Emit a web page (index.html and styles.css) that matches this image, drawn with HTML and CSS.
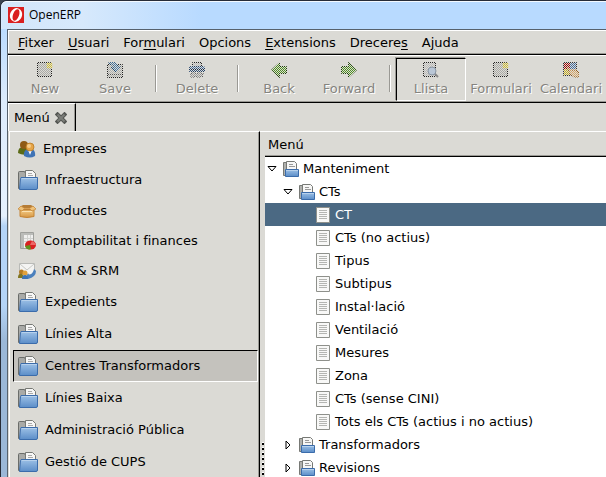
FILE: index.html
```html
<!DOCTYPE html>
<html lang="ca">
<head>
<meta charset="utf-8">
<title>OpenERP</title>
<link rel="stylesheet" href="styles.css">
</head>
<body>
<svg class="defs" aria-hidden="true">
  <defs>
    <linearGradient id="blue" x2="0" y2="1"><stop offset="0" stop-color="#9dc1e6"/><stop offset="1" stop-color="#5b8dc8"/></linearGradient>
    <linearGradient id="box" x2="0" y2="1"><stop offset="0" stop-color="#f3cb85"/><stop offset="1" stop-color="#d69643"/></linearGradient>
    <pattern id="dither" width="2" height="2" patternUnits="userSpaceOnUse"><path d="M0 0h1v1H0zM1 1h1v1H1z" fill="#dbdad5" shape-rendering="crispEdges"/></pattern>
    <symbol id="folder" viewBox="0 0 20 20">
      <path d="M.5 18.500V2.500q0-1 1-1h5l1 2v15z" fill="#a9aaa7" stroke="#6b6d6a"/>
      <path d="M7.500 9V.5h7l3 3V9z" fill="#f7f7f6" stroke="#777975"/>
      <path d="M10 3.500h4M10 5.500h5" stroke="#aaa"/>
      <path d="M3 7.500h16.500V18q0 1.500-1.500 1.500H1.500L2.500 8.500z" fill="url(#blue)" stroke="#3b6cab"/>
      <path d="M4 8.500h15" stroke="#b7d1ec"/>
    </symbol>
    <symbol id="folder-small" viewBox="0 0 16 16">
      <path d="M.5 14.500V1.500h4v13z" fill="#b0b1ae" stroke="#777975"/>
      <path d="M3.500 9V.5h8l2 2V9z" fill="#f7f7f6" stroke="#777975"/>
      <path d="M6 3.500h4M6 5.500h6" stroke="#999"/>
      <path d="M2.500 8.500h13v7h-13z" fill="url(#blue)" stroke="#3b6cab"/>
      <path d="M3 9.500h12" stroke="#b7d1ec"/>
    </symbol>
    <symbol id="page" viewBox="0 0 14 16">
      <path d="M.5.5h13v15H.5z" fill="#f8f8f7" stroke="#8e908b"/>
      <path d="M3 3.500h8M3 5.500h8M3 7.500h8M3 9.500h8M3 11.500h8" stroke="#b4b5b2"/>
    </symbol>
    <symbol id="sheet" viewBox="0 0 16 16">
      <path d="M.5.500h14v14H.5z" fill="#aaaaa6" stroke="#222"/>
      <path d="M12.500 0v7M9 3.500h7M10 1l5 5M15 1l-5 5" stroke="#d0bd2c" stroke-width="1.500"/>
      <path d="M0 0h16v16H0z" fill="url(#dither)"/>
    </symbol>
  </defs>
</svg>
<div class="window">
  <header class="titlebar">
    <svg class="logo" viewBox="0 0 16 16"><path d="M0 0h16v16H0z" fill="#da2020"/><ellipse cx="8" cy="8" rx="6" ry="7" transform="rotate(20 8 8)" fill="#fff"/><ellipse cx="8" cy="8" rx="3" ry="6" transform="rotate(20 8 8)" fill="#da2020"/></svg>
    <h1>OpenERP</h1>
  </header>
  <div class="client">
    <nav class="menubar">
      <button><u>F</u>itxer</button><button><u>U</u>suari</button><button>For<u>m</u>ulari</button><button>Opcions</button><button><u>E</u>xtensions</button><button>Drecere<u>s</u></button><button>A<u>j</u>uda</button>
    </nav>
    <div class="toolbar" role="toolbar">
      <button class="tool" disabled><svg><use href="#sheet"/></svg>New</button>
      <button class="tool" disabled><svg viewBox="0 0 16 16"><path d="M.5 2.500h15v13H.5z" fill="#b0b0ac" stroke="#222"/><path d="M1 12.500h14" stroke="#555"/><path d="M2 0h4q4 0 5 5h3l-5 5-5-5h3q0-2-5-3z" fill="#4c7ba5" stroke="#204a70"/><path d="M0 0h16v16H0z" fill="url(#dither)"/></svg>Save</button>
      <span class="separator"></span>
      <button class="tool" disabled><svg viewBox="0 0 16 16"><path d="M3.500.5h9v5h-9z" fill="#bbb" stroke="#222"/><path d="M1.500 4.500h13q1 0 1 1v4H.5v-4q0-1 1-1z" fill="#507bae" stroke="#223f66"/><path d="M1 7.500h14" stroke="#192a44" stroke-width="2"/><path d="M2 11h12v4H2z" fill="#999" stroke="#444" stroke-dasharray="2 1"/><path d="M0 0h16v16H0z" fill="url(#dither)"/></svg>Delete</button>
      <span class="separator"></span>
      <button class="tool" disabled><svg viewBox="0 0 16 16"><path d="M.5 8l8-7.500V4.500h7v7h-7v4z" fill="#4e9020" stroke="#20400c"/><path d="M0 0h16v16H0z" fill="url(#dither)"/></svg>Back</button>
      <button class="tool" disabled><svg viewBox="0 0 16 16"><path d="M15.500 8l-8-7.500V4.500h-7v7h7v4z" fill="#4e9020" stroke="#20400c"/><path d="M0 0h16v16H0z" fill="url(#dither)"/></svg>Forward</button>
      <span class="separator"></span>
      <button class="tool pressed" disabled><svg viewBox="0 0 16 16"><path d="M.5.500h12v14H.5z" fill="#bbb" stroke="#222"/><path d="M0 0h16v16H0z" fill="url(#dither)"/><path d="M11 11l4 4" stroke="#888" stroke-width="2"/><circle cx="9" cy="9" r="4" fill="#b9c6d6" stroke="#8b96a3"/></svg>Llista</button>
      <button class="tool" disabled><svg><use href="#sheet"/></svg>Formulari</button>
      <button class="tool" disabled><svg viewBox="0 0 16 16"><path d="M0 0h7v7H0z" fill="#a00000"/><path d="M7 0h7v7H7z" fill="#426ca0"/><path d="M0 7h7v7H0z" fill="#c9b01c"/><path d="M.5.500h13v13H.5z" fill="none" stroke="#333"/><path d="M4 5l4 3h5l3 3v4h-5l-4-3z" fill="#d9a768" stroke="#9a5c18"/><path d="M0 0h16v16H0z" fill="url(#dither)"/></svg>Calendari</button>
    </div>
    <div class="tabs">
      <div class="tab"><span>Menú</span><button class="close" aria-label="Tanca"><svg viewBox="0 0 12 12"><path d="M2.500 2.500l7 7M9.500 2.500l-7 7" stroke="#555753" stroke-width="4" stroke-linecap="square"/><path d="M2.500 2.500l7 7M9.500 2.500l-7 7" stroke="#7b7d78" stroke-width="2"/></svg></button></div>
    </div>
    <main class="panes">
      <nav class="sidebar">
        <button class="item small"><svg viewBox="0 0 18 18"><path d="M0 13q0-6 5-6 6 0 6 6v1q-6 2-11-1z" fill="#5b6b17"/><circle cx="6" cy="5" r="4" fill="#8f5b16"/><path d="M6 16q-1-7 6-7 6 0 5 7-5 3-11 0z" fill="#3f73b5"/><path d="M10 10l2 5 2-5z" fill="#fff"/><circle cx="12" cy="7" r="4" fill="#e6a548" stroke="#b97a22" stroke-width=".8"/><circle cx="11" cy="6" r="2" fill="#f6cd8a"/></svg>Empreses</button>
        <button class="item"><svg><use href="#folder"/></svg>Infraestructura</button>
        <button class="item small"><svg viewBox="0 0 18 18"><path d="M2 5l3-2h8l3 2-1 3H3z" fill="#b57c36"/><path d="M2 8h14v6.500q-7 2-14 0z" fill="url(#box)" stroke="#c48435"/><path d="M3 4L0 7l4 2 2-2h6l2 2 4-2-3-3-3 2H6z" fill="#eec17a" stroke="#c48435" stroke-width=".7"/><path d="M4 9.500h10" stroke="#fae2b2"/></svg>Productes</button>
        <button class="item small"><svg viewBox="0 0 18 18"><path d="M2.500.500h13v16h-13z" fill="#f0f0ef" stroke="#9fa09c"/><path d="M3 1h3v15H3zM6 1h9v2H6z" fill="#bbbcb9"/><path d="M6 6.500h9M6 9.500h9M9.500 3v13M12.500 3v13" stroke="#d2d3d0"/><ellipse cx="12.500" cy="13" rx="5.500" ry="4.500" fill="#d92020"/><path d="M12 13l2-4q3 1 4 4z" fill="#ed6666"/><path d="M12 13l-5 1q2 5 6 3z" fill="#61941d"/></svg>Comptabilitat i finances</button>
        <button class="item small"><svg viewBox="0 0 18 18"><path d="M1.500 1.500h15v11h-15z" fill="#f4f4f3" stroke="#b9bab7"/><path d="M2 2l7 6 7-6" fill="none" stroke="#c7c8c4"/><path d="M8 16l2-5 1 2q4-1 5-6l2 2q0 6-8 8z" fill="#4b80bd"/><circle cx="3.500" cy="10" r="2.500" fill="#b57b24"/><path d="M0 16q0-5 4-4l3 4z" fill="#81751f"/><circle cx="7" cy="11" r="2.500" fill="#e1a13a"/><path d="M4 17q0-4 3-4t3 4z" fill="#3c73b4"/></svg>CRM &amp; SRM</button>
        <button class="item"><svg><use href="#folder"/></svg>Expedients</button>
        <button class="item"><svg><use href="#folder"/></svg>Línies Alta</button>
        <button class="item selected"><svg><use href="#folder"/></svg>Centres Transformadors</button>
        <button class="item"><svg><use href="#folder"/></svg>Línies Baixa</button>
        <button class="item"><svg><use href="#folder"/></svg>Administració Pública</button>
        <button class="item"><svg><use href="#folder"/></svg>Gestió de CUPS</button>
      </nav>
      <div class="splitter"><span class="grip"></span></div>
      <section class="tree">
        <h2>Menú</h2>
        <ul role="tree">
          <li class="row root" role="treeitem" aria-expanded="true"><svg class="arrow" viewBox="0 0 10 10"><path d="M1 2.500h8L5 7z"/></svg><svg class="icon"><use href="#folder-small"/></svg>Manteniment</li>
          <li class="row branch" role="treeitem" aria-expanded="true"><svg class="arrow" viewBox="0 0 10 10"><path d="M1 2.500h8L5 7z"/></svg><svg class="icon"><use href="#folder-small"/></svg>CTs</li>
          <li class="row leaf current" role="treeitem" aria-selected="true"><svg class="icon"><use href="#page"/></svg>CT</li>
          <li class="row leaf" role="treeitem"><svg class="icon"><use href="#page"/></svg>CTs (no actius)</li>
          <li class="row leaf" role="treeitem"><svg class="icon"><use href="#page"/></svg>Tipus</li>
          <li class="row leaf" role="treeitem"><svg class="icon"><use href="#page"/></svg>Subtipus</li>
          <li class="row leaf" role="treeitem"><svg class="icon"><use href="#page"/></svg>Instal·lació</li>
          <li class="row leaf" role="treeitem"><svg class="icon"><use href="#page"/></svg>Ventilació</li>
          <li class="row leaf" role="treeitem"><svg class="icon"><use href="#page"/></svg>Mesures</li>
          <li class="row leaf" role="treeitem"><svg class="icon"><use href="#page"/></svg>Zona</li>
          <li class="row leaf" role="treeitem"><svg class="icon"><use href="#page"/></svg>CTs (sense CINI)</li>
          <li class="row leaf" role="treeitem"><svg class="icon"><use href="#page"/></svg>Tots els CTs (actius i no actius)</li>
          <li class="row branch" role="treeitem" aria-expanded="false"><svg class="arrow" viewBox="0 0 10 10"><path d="M3 1v8l4-4z"/></svg><svg class="icon"><use href="#folder-small"/></svg>Transformadors</li>
          <li class="row branch" role="treeitem" aria-expanded="false"><svg class="arrow" viewBox="0 0 10 10"><path d="M3 1v8l4-4z"/></svg><svg class="icon"><use href="#folder-small"/></svg>Revisions</li>
        </ul>
      </section>
    </main>
  </div>
</div>
</body>
</html>
```
FILE: styles.css
```css
* { box-sizing: border-box; }
body {
  margin: 0;
  overflow: hidden;
  font: 13px/16px "DejaVu Sans", sans-serif;
  color: #000;
  background: #3c4450;
}
button {
  margin: 0;
  padding: 0;
  border: 0;
  background: none;
  color: inherit;
  font: inherit;
}
svg { display: block; flex: none; fill: none; }
.defs { position: absolute; width: 0; height: 0; }

.window {
  display: flex;
  flex-direction: column;
  min-height: 100vh;
  padding-left: 6px;
  border-top: 1px solid #272c38;
  border-left: 1px solid #272c38;
  border-top-left-radius: 7px;
  background: linear-gradient(#e3eefb 0, #bcdcff 30px, #dcebfc 100px, #e6f1fd 215px, #b4d4f7 225px, #b4d4f7 305px, #9bb8d8 340px);
}
.titlebar {
  display: flex;
  align-items: center;
  gap: 5px;
  height: 28px;
  margin-left: -6px;
  padding: 0 6px 2px;
  border-top: 1px solid #f3f9ff;
  border-left: 1px solid #d9eafd;
  border-top-left-radius: 6px;
  background: linear-gradient(90deg, #d3e6fa, #d7e9fc 80px, #b8daff 200px);
}
.logo { width: 16px; height: 16px; }
h1 { margin: 0; font: 12px/16px "Open Sans", sans-serif; }

.client {
  display: flex;
  flex: 1;
  flex-direction: column;
  border-top: 1px solid #56616d;
  border-left: 1px solid #56616d;
  background: #dbdad5;
}
.menubar {
  display: flex;
  gap: 14px;
  height: 25px;
  padding: 0 10px;
  border-top: 1px solid #fff;
  border-bottom: 1px solid #000;
  box-shadow: inset 0 -1px #9a9994, inset 1px 0 #fff;
}
u { text-underline-offset: 2px; }

.toolbar {
  display: flex;
  height: 48px;
  padding: 2px 0 1px 2px;
  border-top: 1px solid #fff;
  border-bottom: 1px solid #000;
  box-shadow: inset 0 -1px #9a9994, inset 1px 0 #fff;
}
.tool {
  display: flex;
  flex: none;
  flex-direction: column;
  align-items: center;
  gap: 3px;
  width: 70px;
  padding-top: 4px;
  color: #85847f;
  text-shadow: 1px 1px #fff;
}
.tool svg { width: 16px; height: 16px; }
.pressed {
  border: 1px solid;
  border-color: #000 #fff #fff #000;
  padding-top: 3px;
  box-shadow: -1px -1px #9a9994;
}
.separator {
  flex: none;
  width: 2px;
  height: 27px;
  margin: 7px 5px 0;
  border-left: 1px solid #9a9994;
  border-right: 1px solid #fff;
}

.tabs { height: 28px; }
.tab {
  display: flex;
  align-items: center;
  gap: 5px;
  width: max-content;
  height: 28px;
  padding: 0 8px 0 6px;
  border-top: 1px solid #fff;
  border-right: 1px solid #000;
  box-shadow: inset 1px 0 #fff, inset -1px 0 #9a9994;
}
.close svg { width: 12px; height: 12px; }

.panes { display: flex; flex: 1; }
.sidebar {
  display: flex;
  flex: none;
  flex-direction: column;
  width: 251px;
  margin-left: 1px;
  padding: 2px 1px 0 3px;
  border-top: 1px solid #fff;
  border-left: 1px solid #fff;
  border-right: 1px solid #000;
  box-shadow: inset -1px 0 #9a9994;
}
.item {
  display: flex;
  align-items: center;
  gap: 7px;
  height: 32px;
  padding: 0 5px;
  text-align: left;
}
.item svg { width: 20px; height: 20px; }
.small { height: 30px; }
.small svg { width: 18px; height: 18px; }
.selected {
  border: 1px solid;
  border-color: #000 #fff #fff #000;
  padding: 0 4px;
  background: #c4c2bd;
}

.splitter {
  display: flex;
  flex: none;
  align-items: flex-end;
  width: 5px;
  padding: 0 1px 4px;
  border-top: 1px solid #fff;
}
.grip {
  width: 3px;
  height: 33px;
  background:
    linear-gradient(#000, #000) 1px 1px / 2px 2px no-repeat,
    repeating-linear-gradient(#fff 0 1px, #000 1px 3px, #dbdad5 3px 5px) 1px 0 / 2px 100% no-repeat;
}

.tree {
  flex: 1;
  min-width: 0;
  border-top: 1px solid #fff;
  background: #fff;
}
h2 {
  height: 25px;
  margin: 0;
  padding: 5px 3px 4px;
  border-bottom: 1px solid #000;
  box-shadow: inset 0 -1px #9a9994;
  background: #dbdad5;
  font: inherit;
}
ul { margin: 0; padding: 0; list-style: none; }
.row {
  display: flex;
  align-items: center;
  gap: 4px;
  height: 23px;
  white-space: nowrap;
}
.root { padding-left: 2px; }
.branch { padding-left: 18px; }
.leaf { padding-left: 51px; gap: 5px; }
.current { background: #4b6983; color: #fff; }
.arrow { width: 10px; height: 10px; margin-right: 2px; fill: #fff; stroke: #000; }
.row .icon { width: 16px; height: 16px; }
.leaf .icon { width: 14px; }
```
